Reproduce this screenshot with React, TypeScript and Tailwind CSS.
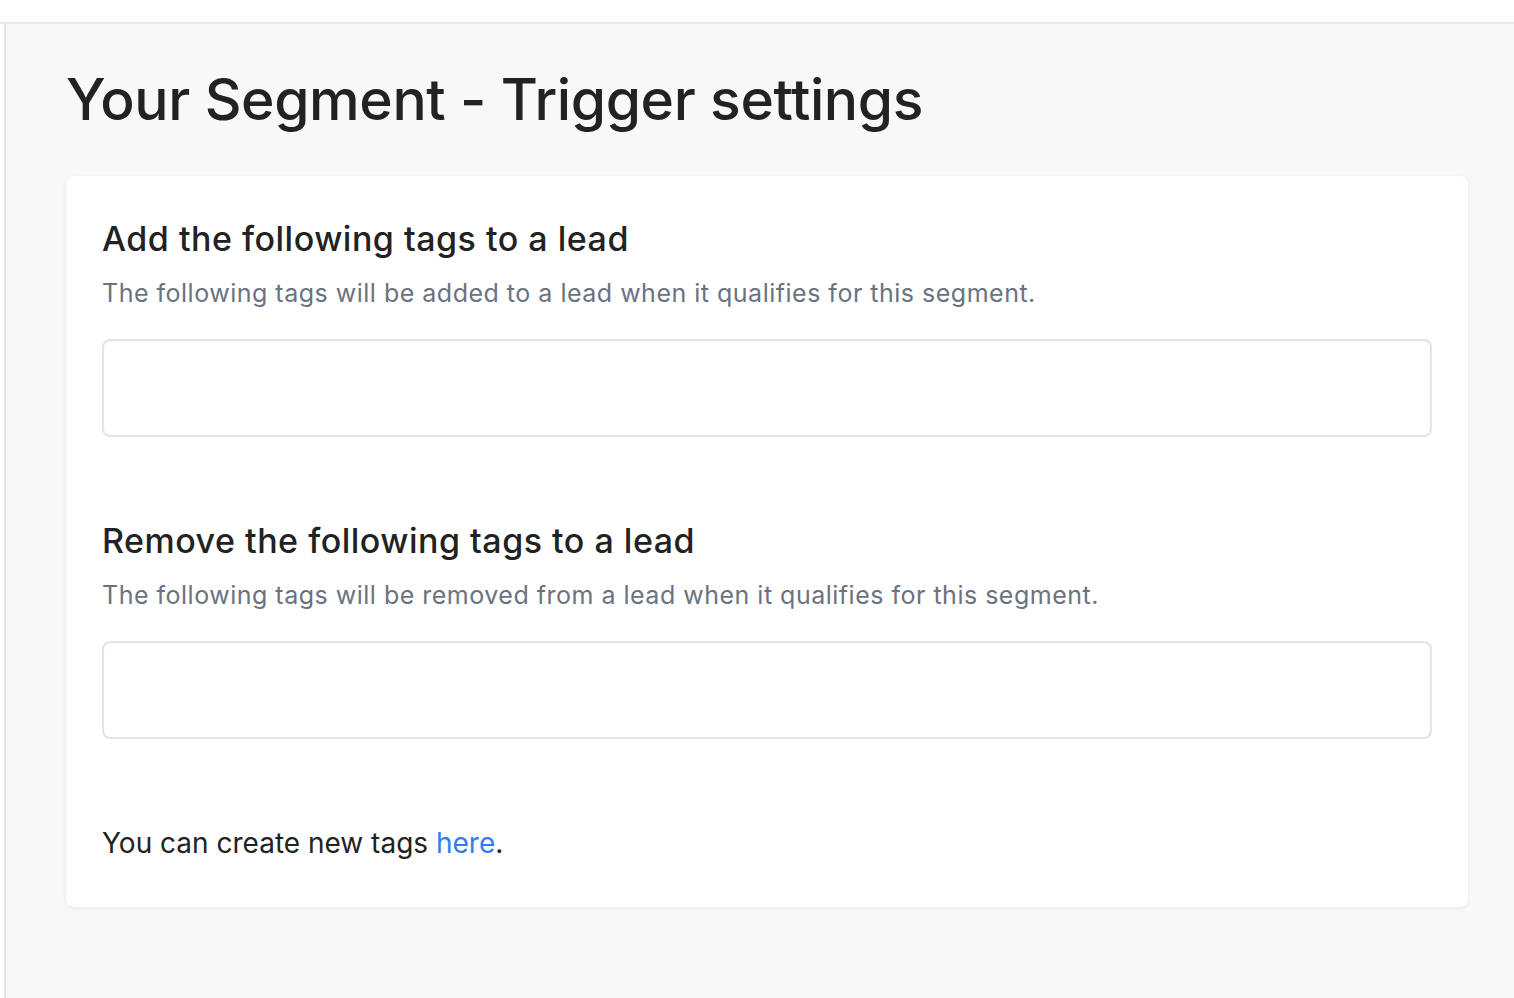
import React from 'react';

const TagSection = ({ title, description }: { title: string; description: string }) => (
  <div>
    <h2 className="text-[34px] font-medium leading-[44px] text-[#222222] tracking-[0.5px]">{title}</h2>
    <p className="mt-[16px] text-[25px] leading-[32px] text-[#6b7280] tracking-[0.5px]">{description}</p>
    <div className="mt-[30px] h-[98px] rounded-[8px] border-2 border-[#e4e4e4] bg-white shadow-[inset_0_1px_2px_rgba(0,0,0,0.04)]" />
  </div>
);

const App: React.FC = () => {
  return (
    <div className="min-h-[998px] bg-white font-['Inter','Liberation_Sans',sans-serif]">
      {/* Top bar */}
      <div className="h-[24px] border-b-2 border-[#e8e9ec] bg-white" />

      <div className="flex min-h-[974px]">
        <div className="w-[4px] bg-white" />
        <div className="flex-1 border-l-2 border-[#e2e4e8] bg-[#f7f8fa] pl-[60px] pr-[46px]">
          <h1 className="pt-[44px] text-[57px] font-medium leading-[64px] text-[#222222] tracking-[-0.4px]">
            Your Segment - Trigger settings
          </h1>

          {/* Card */}
          <div className="mt-[44px] rounded-[8px] bg-white px-[36px] pt-[41px] pb-[46px] shadow-[0_1px_4px_rgba(0,0,0,0.08)]">
            <TagSection
              title="Add the following tags to a lead"
              description="The following tags will be added to a lead when it qualifies for this segment."
            />
            <div className="mt-[82px]">
              <TagSection
                title="Remove the following tags to a lead"
                description="The following tags will be removed from a lead when it qualifies for this segment."
              />
            </div>
            <p className="mt-[86px] text-[28px] leading-[36px] text-[#222222]">
              You can create new tags <a href="#" className="text-[#2f7cf6]">here</a>.
            </p>
          </div>
        </div>
      </div>
    </div>
  );
};

export default App;
